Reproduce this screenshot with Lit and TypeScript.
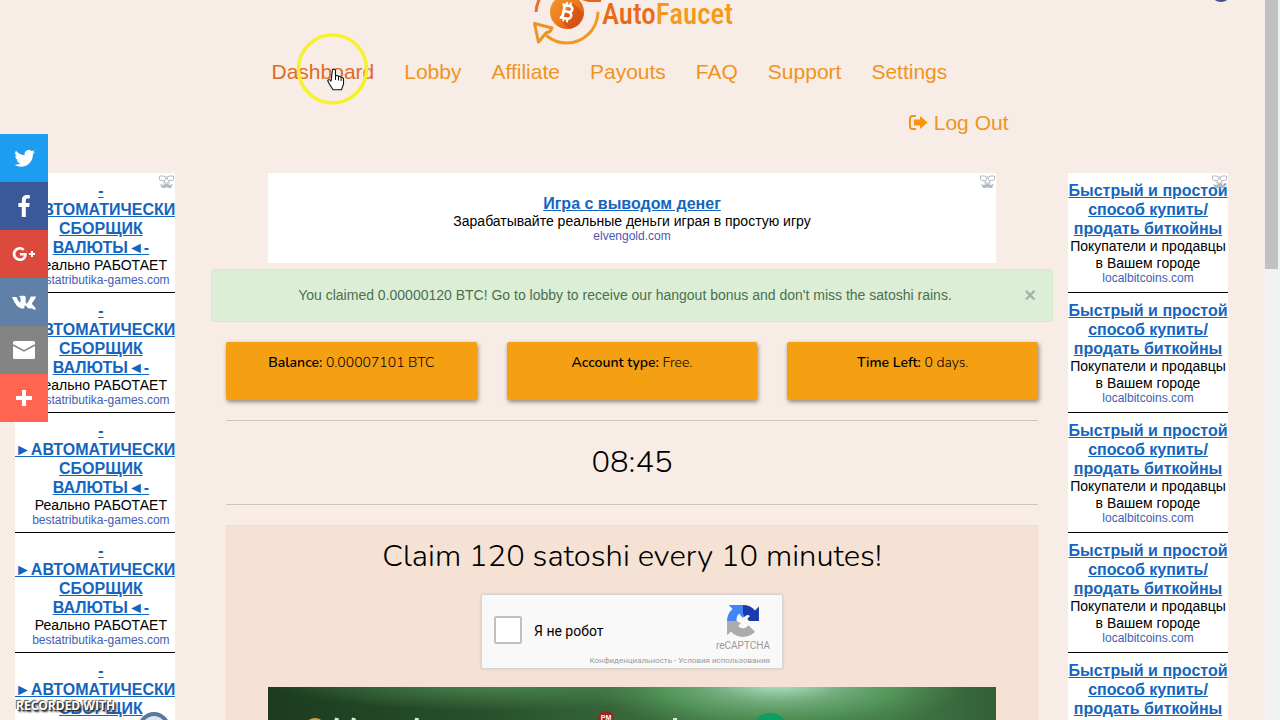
import { LitElement, html, css, svg } from "lit";
import { customElement } from "lit/decorators.js";

const glyphs = {
  twitter: svg`<path fill="#fff" transform="translate(3 2.500) scale(.86)" d="M28 8.6a9.9 9.9 0 0 1-2.8.8 4.9 4.9 0 0 0 2.2-2.7c-1 .5-2 1-3.1 1.2a4.9 4.9 0 0 0-8.4 4.5A14 14 0 0 1 5.700 7.200a4.900 4.900 0 0 0 1.500 6.600c-.8 0-1.500-.2-2.200-.6v.1c0 2.400 1.700 4.400 3.900 4.800a4.900 4.900 0 0 1-2.200.1 4.900 4.900 0 0 0 4.600 3.400A9.900 9.900 0 0 1 4 23.600a14 14 0 0 0 7.500 2.200c9.100 0 14-7.500 14-14v-.6A10 10 0 0 0 28 8.600z"/>`,
  facebook: svg`<path fill="#fff" d="M17.800 27V17h3.400l.5-4h-3.900v-2.500c0-1.100.3-1.900 2-1.900h2V5.200c-.4 0-1.600-.2-3-.2-3 0-5 1.800-5 5.200V13h-3.400v4h3.400v10z"/>`,
  google: svg`<path fill="#fff" d="M12 15v2.400h4a4.200 4.200 0 0 1-4 3 4.400 4.400 0 1 1 2.800-7.700l1.800-1.700A7 7 0 1 0 12 23c4 0 6.700-2.800 6.700-6.800l-.1-1.200zM27 15h-2v-2h-2v2h-2v2h2v2h2v-2h2z"/>`,
  vk: svg`<path fill="#fff" d="M26.700 22.400l-3.600.1s-.8.200-1.800-.5c-1.300-.9-2.600-3.300-3.600-3-1 .3-1 2.500-1 2.500s0 .5-.2.700c-.3.300-.8.300-.8.300H14s-3.500.200-6.600-3C4.100 16 1.100 9.300 1.100 9.300s-.2-.4 0-.7c.2-.2.8-.2.8-.2h3.900s.4 0 .6.200c.2.200.3.400.3.400s.6 1.600 1.500 3c1.600 2.800 2.400 3.400 3 3.100.8-.5.600-4.200.6-4.200s0-1.300-.4-1.900c-.4-.5-1-.6-1.300-.7-.2 0 .2-.6.700-.9.900-.4 2.400-.4 4.200-.4 1.400 0 1.800.1 2.300.2 1.700.4 1.100 2 1.100 5.800 0 1.200-.2 3 .7 3.500.4.300 1.300 0 3.700-4 1.100-2 2-4.100 2-4.100s.2-.4.500-.5c.3-.2.600-.1.600-.1h4.200s1.200-.2 1.400.4c.2.600-.5 2.200-2.400 4.700-3 4-3.400 3.700-.8 6 2.400 2.200 2.900 3.300 3 3.500.9 1.700-1.500 1.900-1.500 1.900z" transform="translate(3.500 4) scale(.77 .82)"/>`,
  mail: svg`<rect x="5" y="7" width="22" height="18" rx="1.600" fill="#fff"/><path d="M5 11l11 6 11-6" fill="none" stroke="#848484" stroke-width="1.500"/>`,
  plus: svg`<path fill="#fff" d="M18 8h-4v6H8v4h6v6h4v-6h6v-4h-6z"/>`,
};

const shares = [
  { name: "Twitter", tone: "twitter", icon: glyphs.twitter },
  { name: "Facebook", tone: "facebook", icon: glyphs.facebook },
  { name: "Google+", tone: "google", icon: glyphs.google },
  { name: "VK", tone: "vk", icon: glyphs.vk },
  { name: "Email", tone: "mail", icon: glyphs.mail },
  { name: "More", tone: "more", icon: glyphs.plus },
];

const mask = html`<svg class="mask" viewBox="0 0 15 14" aria-hidden="true">
  <g fill="none" stroke="#b4bac2" stroke-width="1">
    <path d="M.5 1h4.500l1 1h3l1-1h4.500v3.500l-1.500 1H10L8.500 4.500V3h-2v1.500L5 5.500H2L.5 4.500z" />
    <path d="M6 5.500L4.500 8h6L9 5.500" />
  </g>
  <path fill="#b4bac2" d="M1 9l3 1 3-1.500h1L11 10l3-1-2 4H9l-1.500-1L6 13H3z" />
</svg>`;

@customElement("ad-column")
class AdColumn extends LitElement {
  static properties = {
    heading: { attribute: false },
    lines: { attribute: false },
    site: {},
  };
  declare heading: string[];
  declare lines: string[];
  declare site: string;

  static styles = css`
    :host { display: block; position: relative; }
    .ad {
      box-sizing: border-box;
      height: 120px;
      padding-top: 8px;
      overflow: hidden;
      background: #fff;
      border-bottom: 1px solid #000;
      white-space: nowrap;
      color: #000;
      font-size: 14px;
      line-height: 17px;
    }
    .copy { width: max-content; min-width: 100%; text-align: center; }
    .title { display: block; font-size: 16px; line-height: 19px; font-weight: 700; color: #1465c0; }
    .site { display: block; font-size: 12px; line-height: 12px; color: #3e62b4; text-decoration: none; }
    .mask { position: absolute; top: 2px; right: 1px; width: 15px; height: 14px; }
  `;

  render() {
    return html`${[0, 1, 2, 3, 4].map(
      () => html`<div class="ad"><div class="copy">
        <a class="title" href="#">${this.heading.map((t, i) => (i ? html`<br />${t}` : t))}</a>
        ${this.lines.map((l) => html`<div>${l}</div>`)}
        <a class="site" href="#">${this.site}</a>
      </div></div>`
    )}${mask}`;
  }
}

@customElement("app-root")
class AppRoot extends LitElement {
  static styles = css`
    :host {
      display: flex;
      height: 100vh;
      overflow: hidden;
      position: relative;
      background: #f7ece6;
      color: #000;
      font-family: "Liberation Sans", Arial, sans-serif;
      font-size: 14px;
      line-height: 20px;
    }
    .page { flex: 1; min-width: 0; }
    .scrollbar { width: 15px; background: #f1f1f1; }
    .thumb { width: 13px; height: 269px; background: #c1c1c1; }

    .header { max-width: 782px; margin: 0 auto; }
    .logo { display: flex; justify-content: center; height: 46px; text-decoration: none; }
    .logo-mark { width: 70px; height: 46px; }
    .logo-text {
      font-family: "Roboto Condensed", "Open Sans Condensed", "Liberation Sans", sans-serif;
      font-size: 29px;
      line-height: 28px;
      color: #f5981c;
    }
    .logo-text .first { color: #ea6a1c; }
    .logo-text { font-weight: 500; }
    .nav { display: flex; padding: 0 15px 0 30px; gap: 30px; }
    .nav.end { justify-content: flex-end; }
    .nav a {
      display: flex;
      align-items: center;
      gap: 6px;
      height: 51px;
      font-size: 21px;
      color: #f0941e;
      text-decoration: none;
    }
    .nav a.active { color: #dc6c28; }
    .exit { width: 20px; height: 18px; }

    .columns { display: flex; align-items: flex-start; padding: 25px 37px 0 15px; }
    .side { width: 160px; flex: none; }
    .main { flex: 1; min-width: 0; margin: 0 15px 0 36px; }

    .banner {
      position: relative;
      box-sizing: border-box;
      max-width: 728px;
      height: 90px;
      margin: 0 auto 6px;
      padding-top: 21px;
      background: #fff;
      text-align: center;
      line-height: 17px;
    }
    .banner .title { display: block; font-size: 16px; line-height: 19px; font-weight: 700; color: #1465c0; }
    .banner .site { display: block; font-size: 12px; line-height: 12px; color: #4a58b4; text-decoration: none; }
    .mask { position: absolute; top: 2px; right: 1px; width: 15px; height: 14px; }

    .alert {
      display: flex;
      align-items: center;
      padding: 15px;
      border: 1px solid #d3e8c8;
      border-radius: 4px;
      background: #dcefd6;
      color: #4a7050;
      line-height: 21px;
    }
    .alert p { flex: 1; margin: 0; text-align: center; }
    .close {
      width: 14px;
      padding: 0;
      border: 0;
      background: none;
      color: #a5b5a2;
      font: 700 20px/21px "Liberation Sans", sans-serif;
    }
    .body { padding: 0 15px; font-family: Nunito, Lato, "Open Sans", sans-serif; font-weight: 300; }
    .stats { display: grid; grid-template-columns: repeat(3, 1fr); gap: 30px; margin: 20px 0; }
    .stat {
      box-sizing: border-box;
      height: 58px;
      padding: 11px 0;
      border-radius: 2px;
      background: #f5a012;
      box-shadow: 1px 2px 4px rgba(60, 50, 30, 0.55);
      text-align: center;
    }
    .stat b { font-weight: 600; }
    .timer {
      padding: 24px 0;
      border: solid #cdc4be;
      border-width: 1px 0;
      text-align: center;
      font-size: 31px;
      line-height: 35px;
    }
    .panel {
      margin-top: 20px;
      border: 1px solid #efdccb;
      background: #f5e2d5;
      display: flex;
      flex-direction: column;
      align-items: center;
    }
    .panel h2 { margin: 13px 0 20px; font-size: 31px; line-height: 35px; font-weight: 300; text-align: center; }
    .captcha {
      box-sizing: border-box;
      display: flex;
      align-items: center;
      position: relative;
      width: 302px;
      height: 75px;
      padding: 0 12px;
      border: 1px solid #d6d2d0;
      border-radius: 2px;
      background: #f9f9f9;
      box-shadow: 0 0 3px rgba(0, 0, 0, 0.12);
      font-family: Roboto, sans-serif;
      font-weight: 400;
    }
    .captcha input {
      appearance: none;
      box-sizing: border-box;
      width: 28px;
      height: 28px;
      margin: 0 12px 4px 0;
      border: 2px solid #c1c1c1;
      border-radius: 2px;
      background: #fff;
    }
    .captcha label { flex: 1; margin-bottom: 2px; }
    .brand { align-self: flex-start; display: flex; flex-direction: column; align-items: center; padding-top: 9px; font-size: 10px; line-height: 14px; color: #999; }
    .brand svg { width: 34px; height: 34px; margin-bottom: 1px; }
    .terms { position: absolute; right: 12px; bottom: 2px; font-size: 8px; line-height: 10px; color: #999; }
    .terms a { color: inherit; text-decoration: none; }
    .promo { display: block; width: 100%; max-width: 728px; height: 90px; margin-top: 18px; }

    .share { position: absolute; left: 0; top: 134px; }
    .share a { display: flex; align-items: center; justify-content: center; width: 48px; height: 48px; }
    .share svg { width: 32px; height: 32px; }
    .twitter { background: #1d9df0; }
    .facebook { background: #3b5998; }
    .google { background: #dc4a3e; }
    .vk { background: #6080a8; }
    .mail { background: #848484; }
    .more { background: #ff6550; }

    .pointer { position: absolute; left: 296px; top: 32px; width: 74px; height: 74px; }
    .bubble { position: absolute; right: 48px; top: -20px; width: 22px; height: 22px; border-radius: 50%; background: #45508c; }
    .watermark {
      position: absolute;
      left: 16px;
      bottom: 5px;
      font: 700 12px/18px "Open Sans", sans-serif;
      color: #fff;
      text-shadow: 1px 1px 1px #222, -1px -1px 1px #555, 2px 2px 2px #333;
    }
    .ring { position: absolute; left: 138px; bottom: -24px; width: 24px; height: 24px; border: 4px solid #56789c; border-radius: 50%; background: #dde4ea; }
  `;

  render() {
    const links = ["Dashboard", "Lobby", "Affiliate", "Payouts", "FAQ", "Support", "Settings"];
    const left = ["-", "►АВТОМАТИЧЕСКИЙ", "СБОРЩИК", "ВАЛЮТЫ◄-"];
    const right = ["Быстрый и простой", "способ купить/", "продать биткойны"];
    return html`
      <div class="page">
        <header class="header">
          <a class="logo" href="#">
            <svg class="logo-mark" viewBox="531 0 70 46" aria-hidden="true">
              <defs>
                <linearGradient id="coin" x1="0" y1="0" x2="1" y2="1">
                  <stop offset="0" stop-color="#f79a2c" /><stop offset=".5" stop-color="#ee7a1e" /><stop offset="1" stop-color="#d9480f" />
                </linearGradient>
              </defs>
              <circle cx="566" cy="12" r="17" fill="url(#coin)" />
              <path d="M572 3l11 11a17 17 0 0 1-15 15l-8-8z" fill="#cf4a10" opacity=".6" />
              <g transform="translate(566 12) rotate(12)" fill="none" stroke="#fff" stroke-width="2.600">
                <path d="M-3.500-7V7M-6-6.500H1.500a3 3 0 0 1 0 6.200H-3M1.500-.3a3.300 3.300 0 0 1 0 6.800H-6" />
                <path d="M-1.800-10v3.500M2-10v3.500M-1.800 6.500V10M2 6.500V10" stroke-width="2" />
              </g>
              <path d="M535 12a32 32 0 0 1 4-14" fill="none" stroke="#e8702a" stroke-width="3" />
              <path d="M579-2l9 2.500h12" fill="none" stroke="#e8621c" stroke-width="3" />
              <path d="M597 13c-1 17-15 30-31 30-9 0-14-2-20-7" fill="none" stroke="#f0981f" stroke-width="3" stroke-linecap="round" />
              <path d="M533.500 23.500l17.500 4.500-2 3.500-4 1.500-7.500 9z" fill="none" stroke="#ee9220" stroke-width="3" stroke-linejoin="round" />
            </svg>
            <span class="logo-text"><span class="first">Auto</span>Faucet</span>
          </a>
          <nav class="nav">
            ${links.map((l, i) => html`<a href="#" class=${i ? "" : "active"}>${l}</a>`)}
          </nav>
          <nav class="nav end">
            <a href="#">
              <svg class="exit" viewBox="0 0 20 18" aria-hidden="true">
                <path d="M8 2H4.500A2.500 2.500 0 0 0 2 4.500v8A2.500 2.500 0 0 0 4.500 15H8" fill="none" stroke="#f0941e" stroke-width="2" />
                <path d="M6 5.500h6V2l7.500 6.500L12 15v-3.500H6z" fill="#f7940c" />
              </svg>Log Out</a>
          </nav>
        </header>
        <div class="columns">
          <ad-column class="side" .heading=${left} .lines=${["Реально РАБОТАЕТ"]} site="bestatributika-games.com"></ad-column>
          <main class="main">
            <div class="banner">
              <a class="title" href="#">Игра с выводом денег</a>
              <div>Зарабатывайте реальные деньги играя в простую игру</div>
              <a class="site" href="#">elvengold.com</a>
              ${mask}
            </div>
            <div class="alert" role="alert">
              <p>You claimed 0.00000120 BTC! Go to lobby to receive our hangout bonus and don't miss the satoshi rains.</p>
              <button class="close" aria-label="Close">×</button>
            </div>
            <div class="body">
              <div class="stats">
                <div class="stat"><b>Balance:</b> 0.00007101 BTC</div>
                <div class="stat"><b>Account type:</b> Free.</div>
                <div class="stat"><b>Time Left:</b> 0 days.</div>
              </div>
              <div class="timer">08:45</div>
              <section class="panel">
                <h2>Claim 120 satoshi every 10 minutes!</h2>
                <div class="captcha">
                  <input id="robot" type="checkbox" />
                  <label for="robot">Я не робот</label>
                  <div class="brand">
                    <svg viewBox="0 0 32 32" aria-hidden="true">
                      <path fill="#1c3aa9" d="M31 15.900V2.400l-3.700 3.700A15 15 0 0 0 16 1v7.500l.5 4.500c1.500-2 4-4 6-1.600L20 14l2 2z" />
                      <path fill="#4285f4" d="M16 1H2.500l3.700 3.700A15 15 0 0 0 1 16h9c0-3 0-5 3-7 0 2 2 3 3 4z" />
                      <path fill="#ababab" d="M1 16v13.500l3.700-3.700a15 15 0 0 0 22.600.2L21 20c-1.500 2-3 3-5.500 2.800-3-.3-4-2.300-4-2.300L14 18l-4-2z" />
                    </svg>
                    reCAPTCHA
                  </div>
                  <div class="terms"><a href="#">Конфиденциальность</a> - <a href="#">Условия использования</a></div>
                </div>
                <svg class="promo" viewBox="0 0 728 90" preserveAspectRatio="none" aria-hidden="true">
                  <defs>
                    <linearGradient id="field"><stop offset="0" stop-color="#1c3c1e" /><stop offset=".3" stop-color="#28502b" /><stop offset=".6" stop-color="#3f7444" /><stop offset=".85" stop-color="#427a48" /><stop offset="1" stop-color="#345f36" /></linearGradient>
                    <radialGradient id="glow" gradientUnits="userSpaceOnUse" cx="0" cy="0" r="1" gradientTransform="translate(510 -4) scale(190 52)"><stop offset="0" stop-color="#b4e6c4" /><stop offset=".35" stop-color="#74ad80" /><stop offset=".65" stop-color="#559a5c" stop-opacity=".8" /><stop offset="1" stop-color="#4a8450" stop-opacity="0" /></radialGradient>
                    <radialGradient id="sheen" gradientUnits="userSpaceOnUse" cx="0" cy="0" r="1" gradientTransform="translate(230 -6) scale(230 30)"><stop offset="0" stop-color="#4f8a54" /><stop offset="1" stop-color="#4f8a54" stop-opacity="0" /></radialGradient>
                  </defs>
                  <rect width="728" height="90" fill="url(#field)" />
                  <rect width="728" height="90" fill="url(#sheen)" />
                  <rect width="728" height="90" fill="url(#glow)" />
                  <circle cx="47" cy="42" r="11" fill="#e8963a" />
                  <path d="M69 31l-3 12M86 31l-3 12M149 31l-2 12M407 31v10" stroke="#dfe9df" stroke-width="4" />
                  <circle cx="338" cy="32" r="8" fill="#9c2424" />
                  <text x="338" y="33" text-anchor="middle" font-family="Liberation Sans" font-weight="700" font-size="7" fill="#fff">PM</text>
                  <ellipse cx="502" cy="43" rx="18" ry="17" fill="#0f9c62" />
                </svg>
              </section>
            </div>
          </main>
          <ad-column class="side" .heading=${right} .lines=${["Покупатели и продавцы", "в Вашем городе"]} site="localbitcoins.com"></ad-column>
        </div>
      </div>
      <div class="scrollbar"><div class="thumb"></div></div>
      <div class="bubble"></div>
      <nav class="share" aria-label="Share">
        ${shares.map((s) => html`<a href="#" class=${s.tone} aria-label=${s.name}><svg viewBox="0 0 32 32">${s.icon}</svg></a>`)}
      </nav>
      <div class="ring"></div>
      <div class="watermark">RECORDED WITH</div>
      <svg class="pointer" viewBox="296 32 74 74" aria-hidden="true">
        <circle cx="332.500" cy="69" r="34" fill="none" stroke="#f5f22c" stroke-width="3.500" />
        <path d="M332.500 69.500c1.500-1 3 0 3 1.500v5c1-1 2.800-.6 3 .8 1-.8 2.500-.3 2.600 1 1-.5 2.400 0 2.400 1.500v4.500l-2 6h-8.500l-3.500-5.500-1.800-3.500c.6-1.500 2.200-1.200 3.300.3z" fill="#fff" stroke="#111" stroke-width="1.100" stroke-linejoin="round" />
        <path d="M335.500 76v4M338.500 77v3.500M341.100 78.500V81" stroke="#111" stroke-width="1" />
      </svg>
    `;
  }
}
